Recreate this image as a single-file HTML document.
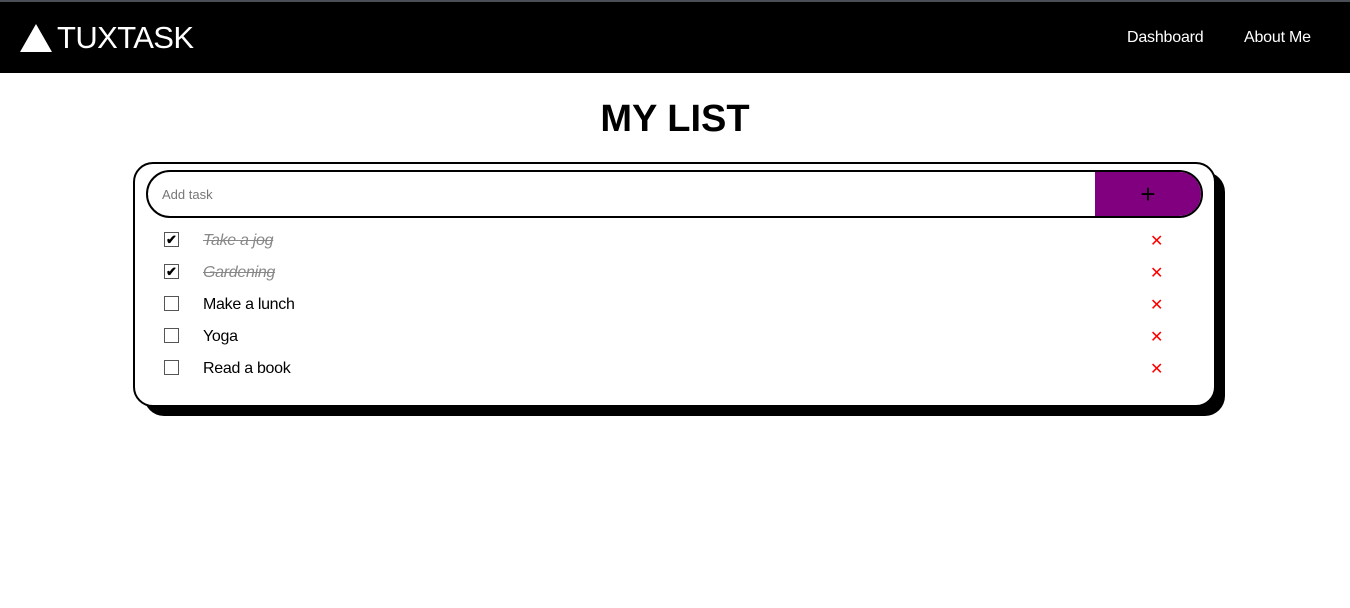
<!DOCTYPE html>
<html><head><style>
*{margin:0;padding:0;box-sizing:border-box}
body{width:1350px;height:608px;background:#fff;font-family:"Liberation Sans",Arial,sans-serif;position:relative;overflow:hidden}
.top{position:absolute;left:0;top:0;width:1350px;height:2px;background:#4a4f57}
.nav{position:absolute;left:0;top:2px;width:1350px;height:71px;background:#000;color:#fff}
.logo{position:absolute;left:57px;top:18px;font-size:31px;letter-spacing:-0.6px}
.tri{position:absolute;left:20px;top:22px;width:0;height:0;border-left:16px solid transparent;border-right:16px solid transparent;border-bottom:28px solid #fff}
.nl{position:absolute;top:27px;font-size:16px;letter-spacing:-0.2px}
h1{position:absolute;left:0;width:1350px;text-align:center;top:98px;font-size:38px;font-weight:bold}
.shadow{position:absolute;left:144px;top:172px;width:1081px;height:244px;background:#000;border-radius:20px}
.card{position:absolute;left:133px;top:162px;width:1083px;height:245px;background:#fff;border:2px solid #000;border-radius:20px}
.inp{position:absolute;left:146px;top:170px;width:1057px;height:48px;border:2px solid #000;border-radius:24px;overflow:hidden;background:#fff}
.inp span{position:absolute;left:14px;top:15px;font-size:13px;color:#777}
.btn{position:absolute;right:0;top:0;width:106px;height:44px;background:#800080;color:#000;font-size:26px;text-align:center;line-height:44px}
.row{position:absolute;left:0;width:1350px;height:20px}
.cb{position:absolute;left:164px;top:2px;width:15px;height:15px;border:1px solid #555;background:#fff;font-size:13px;line-height:13px;text-align:center;font-weight:bold}
.t{position:absolute;left:203px;top:2px;font-size:16px;letter-spacing:-0.3px}
.done{color:#888;font-style:italic;text-decoration:line-through}
.x{position:absolute;left:1150px;top:1px;color:#f00;font-size:16px}
</style></head><body>
<div class="top"></div>
<div class="nav"><div class="tri"></div><div class="logo">TUXTASK</div>
<div class="nl" style="left:1127px">Dashboard</div><div class="nl" style="left:1244px">About Me</div></div>
<h1>MY LIST</h1>
<div class="shadow"></div>
<div class="card"></div>
<div class="inp"><span>Add task</span><div class="btn">+</div></div>
<div class="row" style="top:230px"><div class="cb">✔</div><div class="t done">Take a jog</div><div class="x">✕</div></div>
<div class="row" style="top:262px"><div class="cb">✔</div><div class="t done">Gardening</div><div class="x">✕</div></div>
<div class="row" style="top:294px"><div class="cb"></div><div class="t">Make a lunch</div><div class="x">✕</div></div>
<div class="row" style="top:326px"><div class="cb"></div><div class="t">Yoga</div><div class="x">✕</div></div>
<div class="row" style="top:358px"><div class="cb"></div><div class="t">Read a book</div><div class="x">✕</div></div>
</body></html>
